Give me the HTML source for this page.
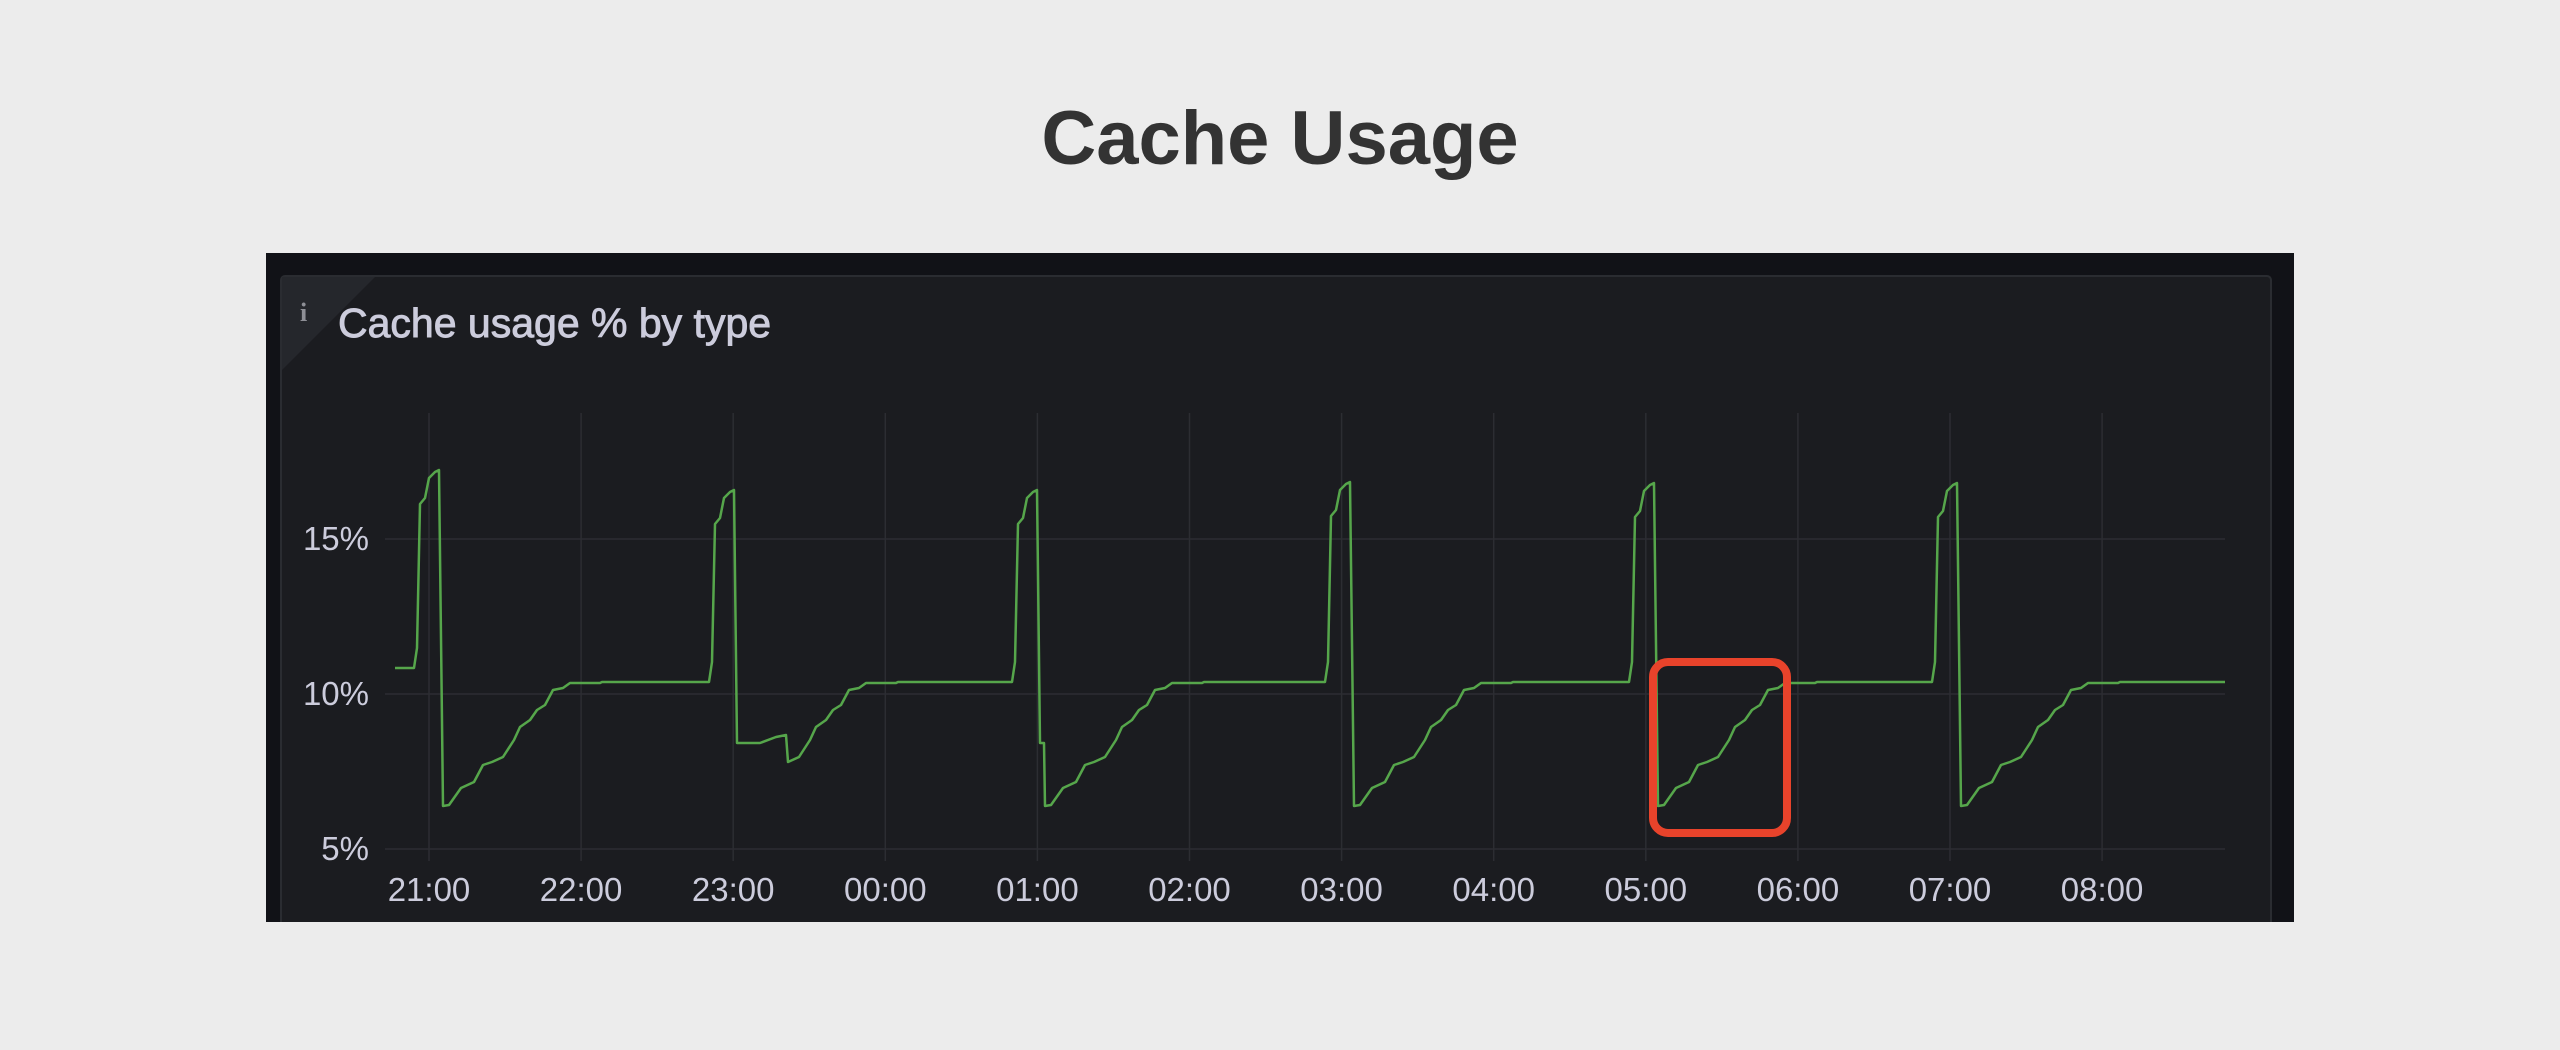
<!DOCTYPE html>
<html><head><meta charset="utf-8"><style>
html,body{margin:0;padding:0;}
body{width:2560px;height:1050px;background:#ececec;position:relative;overflow:hidden;font-family:"Liberation Sans",sans-serif;}
h1{position:absolute;left:0;width:2560px;top:94px;margin:0;text-align:center;font-size:76px;font-weight:bold;color:#333;line-height:90px;}
</style></head><body>
<h1>Cache Usage</h1>
<svg width="2560" height="1050" style="position:absolute;left:0;top:0" xmlns="http://www.w3.org/2000/svg">
<defs><clipPath id="c"><rect x="266" y="253" width="2028" height="669"/></clipPath></defs>
<rect x="266" y="253" width="2028" height="669" fill="#111217"/>
<g clip-path="url(#c)">
<rect x="281" y="276" width="1990" height="700" rx="4" fill="#1b1c20" stroke="#2a2c31" stroke-width="2"/>
<polygon points="282,277 375,277 282,370" fill="#25272c"/>
</g>
<text x="300" y="321" font-family="Liberation Serif,serif" font-weight="bold" font-size="26" fill="#8e8f96">i</text>
<text x="338" y="337" font-size="41" fill="#ccccdc" stroke="#ccccdc" stroke-width="0.9">Cache usage % by type</text>
<g stroke="#2c2d32" stroke-width="1.5" id="grid"></g>
<g font-size="33" fill="#ccccdc" text-anchor="end">
<text x="369" y="550">15%</text><text x="369" y="705">10%</text><text x="369" y="860">5%</text>
</g>
<g font-size="33" fill="#ccccdc" text-anchor="middle" id="xl"></g>
<path id="curve" fill="none" stroke="#56a64b" stroke-width="2.5" stroke-linejoin="round"/>
<rect x="1653" y="662" width="134" height="171" rx="15" fill="none" stroke="#e8432b" stroke-width="8"/>
</svg>
<script>
var g=document.getElementById('grid'),xl=document.getElementById('xl'),ns='http://www.w3.org/2000/svg';
var labs=['21:00','22:00','23:00','00:00','01:00','02:00','03:00','04:00','05:00','06:00','07:00','08:00'];
[539,694,849].forEach(function(y){var l=document.createElementNS(ns,'line');l.setAttribute('x1',385);l.setAttribute('x2',2225);l.setAttribute('y1',y);l.setAttribute('y2',y);g.appendChild(l);});
for(var k=0;k<12;k++){var x=429+152.1*k;var l=document.createElementNS(ns,'line');l.setAttribute('x1',x);l.setAttribute('x2',x);l.setAttribute('y1',413);l.setAttribute('y2',861);g.appendChild(l);
var t=document.createElementNS(ns,'text');t.setAttribute('x',x);t.setAttribute('y',901);t.textContent=labs[k];xl.appendChild(t);}
var ramp=[[6,805],[18,788],[31,782],[40,765],[49,762],[60,757],[71,740],[77,727],[87,720],[94,710],[102,705],[110,690],[120,688],[127,683]];
var drops=[441,736,1039,1352,1656,1959],peaks=[470,490,490,482,483,483];
var p='M395,668';var flat=668;
drops.forEach(function(d,i){
 var pk=peaks[i];
 p+=' L'+(d-27)+','+flat+' L'+(d-24)+','+(flat-20)+' L'+(d-21)+','+(pk+34)+' L'+(d-16)+','+(pk+28)+' L'+(d-12)+','+(pk+8)+' L'+(d-6)+','+(pk+2)+' L'+(d-2)+','+pk;
 var s=d+2;
 if(i==1){p+=' L'+(d+1)+',743 L'+(d+24)+',743 L'+(d+40)+',737 L'+(d+50)+',735 L'+(d+52)+',762';s=d+52-49;
   ramp.slice(5).forEach(function(r){p+=' L'+(s+r[0])+','+r[1];});}
 else{ if(i==2){p+=' L'+(d+1)+',743 L'+(d+5)+',743';s=d+6;}
   p+=' L'+s+',806';ramp.forEach(function(r){p+=' L'+(s+r[0])+','+r[1];});}
 flat=682;p+=' L'+(s+127+30)+',683 L'+(s+127+32)+',682';
});
p+=' L2225,682';
document.getElementById('curve').setAttribute('d',p);
</script>
</body></html>
